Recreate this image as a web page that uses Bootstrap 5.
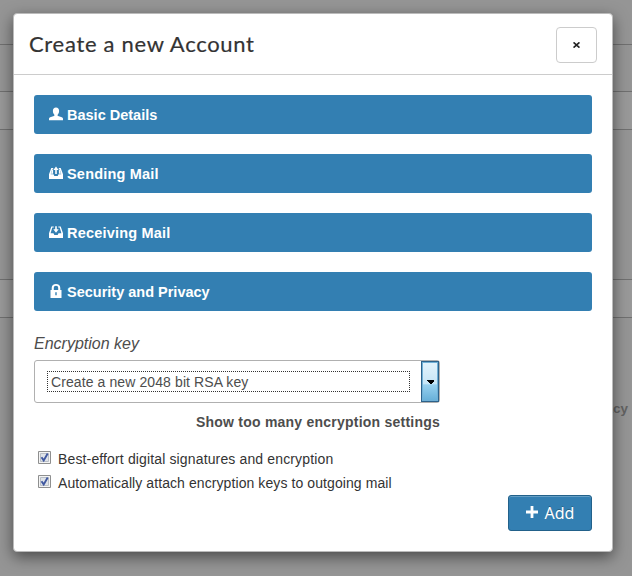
<!DOCTYPE html>
<html lang="en">
<head>
<meta charset="utf-8">
<meta name="viewport" content="width=device-width, initial-scale=1">
<title>Create a new Account</title>
<link href="https://cdn.jsdelivr.net/npm/bootstrap@5.3.0/dist/css/bootstrap.min.css" rel="stylesheet">
<style>
body { font-family: "Liberation Sans", Arial, sans-serif; font-size: 14px; line-height: 20px; color: #333; background: #959595; height: 576px; overflow: hidden; }
.backdrop-page { background: #959595; z-index: 0; }
.rule { border-top: 1px solid #707070; margin-top: 44px; }
.band { background: #999; height: 39px; border-top: 1px solid #707070; border-bottom: 1px solid #707070; margin-top: 46px; }
.band-lower { margin-top: 149px; }
.dialog { z-index: 1; width: 600px; height: 539px; margin: 13px 0 0 13px; border: 1px solid #bbb; border-radius: 4px; box-shadow: 0 5px 15px rgba(0,0,0,.5); }
.dialog-head { height: 61px; border-bottom: 1px solid #ccc; padding: 1px 15px 0; }
.dialog-title { font-family: Lato, sans-serif; font-size: 22px; line-height: 30px; letter-spacing: .7px; color: #333; font-weight: 400; -webkit-text-stroke: .2px #333; padding-bottom: 2px; }
.close-btn { width: 41px; height: 36px; border: 1px solid #ccc; border-radius: 4px; background: #fff; }
.dialog-main { padding: 20px 20px 0; }
.section-list { row-gap: 20px; }
.section-btn { height: 39px; background: #337fb2; border-radius: 3px; padding: 1px 15px 0; color: #fff; font-weight: 700; font-size: 14.5px; border: 0; text-align: left; }
.section-btn svg { width: 14px; height: 14px; margin: -2px 4px 0 0; }
.wide-text { letter-spacing: .2px; }
.key-label { font-size: 16px; line-height: 22px; color: #4d4d4d; margin-top: 22px; }
.key-select { width: 406px; height: 43px; margin-top: 5px; border: 1px solid #b0b0b0; border-radius: 3px; padding-left: 12px; color: #4d4d4d; }
.key-value { width: 363px; height: 21px; border: 1px dotted #333; padding-left: 3px; font-size: 14px; line-height: 20px; letter-spacing: .1px; }
.drop-btn { width: 18px; height: 41px; border: 1px solid #2c628b; box-shadow: inset 0 0 0 1px #70b0d6; background: linear-gradient(#e3f3fc 0, #c6e5f6 57%, #98d1ef 58%, #66afd8 100%); }
.more-link { width: 406px; font-size: 14px; font-weight: 700; color: #4d4d4d; margin-top: 9px; letter-spacing: .23px; }
.option-list { margin-top: 15px; }
.option { height: 24px; padding-left: 4px; font-size: 14px; }
.option svg { width: 13px; height: 13px; margin: -4px 7px 0 0; }
.option-first { letter-spacing: .14px; }
.option-second { letter-spacing: .085px; }
.add-btn { width: 84px; height: 36px; background: #337fb2; border: 1px solid #22618a; border-radius: 3px; box-shadow: inset 0 1px 0 #659fc5; color: #fff; font-family: "Noto Sans", sans-serif; font-size: 16px; font-weight: 400; line-height: 24px; text-shadow: 0 -1px 0 rgba(0,0,0,.25); }
.add-btn svg { margin: -2px 7px 0 0; }
.behind-text { color: #626262; font-weight: 700; font-size: 13.5px; padding-right: 4px; margin-top: 81px; }
</style>
</head>
<body class="position-relative">
<div class="backdrop-page position-absolute top-0 start-0 w-100 h-100 d-flex flex-column">
  <div class="rule"></div>
  <div class="band"></div>
  <div class="band band-lower"></div>
  <div class="behind-text text-end">Privacy</div>
</div>
<main class="dialog position-relative bg-white">
  <header class="dialog-head d-flex align-items-center justify-content-between">
    <h1 class="dialog-title m-0">Create a new Account</h1>
    <button class="close-btn d-flex align-items-center justify-content-center p-0" type="button" aria-label="Close">
      <svg width="7" height="6" viewBox="0 0 7 6"><path d="M.5.4 6.5 5.6M6.5.4.5 5.6" stroke="#222" stroke-width="1.7"/></svg>
    </button>
  </header>
  <div class="dialog-main">
    <div class="section-list d-grid">
      <button class="section-btn d-flex align-items-center" type="button"><svg viewBox="0 0 14 14"><path fill="#fff" d="M7 .5c2 0 3.100 1.300 3.100 3.300 0 1.700-.5 2.800-1.300 3.600-.4.500-.3 1.300.3 1.600l3.700 1.200c.8.300 1.200.8 1.200 1.700v1.300H0v-1.300c0-.9.400-1.400 1.200-1.700L4.900 9c.6-.3.700-1.100.3-1.600-.8-.8-1.300-1.900-1.300-3.600C3.900 1.800 5 .5 7 .5z"/></svg>Basic Details</button>
      <button class="section-btn d-flex align-items-center" type="button"><svg viewBox="0 0 14 14"><path fill="#fff" d="M2.300 2h1.900v1H3.400L1.700 8.300H4.500l.8 1.600h3.400l.8-1.600h2.800L10.600 3H9.800V2h1.900L14 8.300V13H0V8.300z"/><path fill="#fff" d="M7 .6 9.600 4H7.800v4H6.200V4H4.400zM3.300 3.500h.8v4.300H2zM10.700 3.500h-.8v4.300H12z"/></svg><span class="wide-text">Sending Mail</span></button>
      <button class="section-btn d-flex align-items-center" type="button"><svg viewBox="0 0 14 14"><path fill="#fff" d="M2.300 1.500h2.400v1.100H3.300L1.600 8.300h2.900l.8 1.600h3.400l.8-1.600h2.900l-1.700-5.700H9.300V1.500h2.400L14 8.300V13H0V8.300z"/><path fill="#fff" d="M6.200 1.300h1.600v3h1.900L7 7.800 4.300 4.300h1.900z"/></svg><span class="wide-text">Receiving Mail</span></button>
      <button class="section-btn d-flex align-items-center" type="button"><svg viewBox="0 0 14 14"><path fill="#fff" fill-rule="evenodd" d="M2.700 6V4.100C2.700 1.500 4.500 0 7 0s4.300 1.500 4.300 4.100V6h1.200v8h-11V6zm2.100 0h4.400V4.100C9.200 2.600 8.300 1.800 7 1.800S4.800 2.600 4.800 4.100zM6.300 8.300v3h1.400v-3z"/></svg>Security and Privacy</button>
    </div>
    <div class="key-label fst-italic">Encryption key</div>
    <div class="key-select d-flex align-items-center justify-content-between">
      <div class="key-value">Create a new 2048 bit RSA key</div>
      <div class="drop-btn d-flex align-items-center justify-content-center"><svg width="7" height="4" viewBox="0 0 7 4" shape-rendering="crispEdges"><path d="M0 0h7v1L4 4H3L0 1z"/></svg></div>
    </div>
    <div class="more-link text-end">Show too many encryption settings</div>
    <div class="option-list">
      <div class="option option-first d-flex align-items-center"><svg viewBox="0 0 13 13"><path fill="#f4f4f4" stroke="#8e8f8f" d="M.5.5h12v12H.5z"/><path fill="#dfe3e8" stroke="#b9bfc6" d="M2.500 2.500h8v8h-8z"/><path d="M3.500 6.200 5.700 9.400 9.700 2.600" fill="none" stroke="#4058a0" stroke-width="1.900"/></svg><span>Best-effort digital signatures and encryption</span></div>
      <div class="option option-second d-flex align-items-center"><svg viewBox="0 0 13 13"><path fill="#f4f4f4" stroke="#8e8f8f" d="M.5.5h12v12H.5z"/><path fill="#dfe3e8" stroke="#b9bfc6" d="M2.500 2.500h8v8h-8z"/><path d="M3.500 6.200 5.700 9.400 9.700 2.600" fill="none" stroke="#4058a0" stroke-width="1.900"/></svg><span>Automatically attach encryption keys to outgoing mail</span></div>
    </div>
    <button class="add-btn d-flex align-items-center justify-content-center ms-auto p-0" type="button"><svg width="12" height="12" viewBox="0 0 12 12"><path d="M6 0v12M0 6h12" stroke="#fff" stroke-width="2.800"/></svg>Add</button>
  </div>
</main>
<script src="https://cdn.jsdelivr.net/npm/bootstrap@5.3.0/dist/js/bootstrap.bundle.min.js"></script>
</body>
</html>
